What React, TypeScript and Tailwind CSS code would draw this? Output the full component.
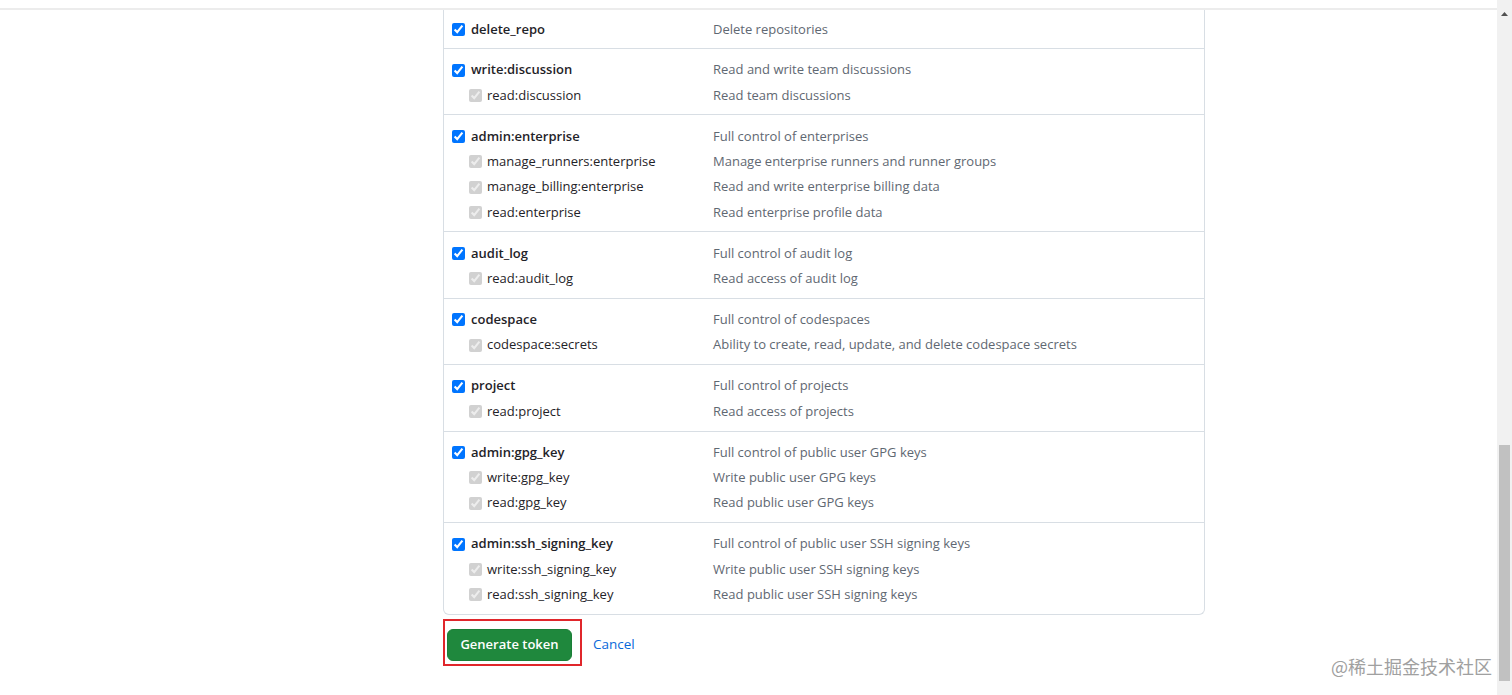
import React from "react";

type Item = { name: string; desc: string };
type Group = { main: Item; subs: Item[] };

const groups: Group[] = [
  { main: { name: "delete_repo", desc: "Delete repositories" }, subs: [] },
  {
    main: { name: "write:discussion", desc: "Read and write team discussions" },
    subs: [{ name: "read:discussion", desc: "Read team discussions" }],
  },
  {
    main: { name: "admin:enterprise", desc: "Full control of enterprises" },
    subs: [
      { name: "manage_runners:enterprise", desc: "Manage enterprise runners and runner groups" },
      { name: "manage_billing:enterprise", desc: "Read and write enterprise billing data" },
      { name: "read:enterprise", desc: "Read enterprise profile data" },
    ],
  },
  {
    main: { name: "audit_log", desc: "Full control of audit log" },
    subs: [{ name: "read:audit_log", desc: "Read access of audit log" }],
  },
  {
    main: { name: "codespace", desc: "Full control of codespaces" },
    subs: [{ name: "codespace:secrets", desc: "Ability to create, read, update, and delete codespace secrets" }],
  },
  {
    main: { name: "project", desc: "Full control of projects" },
    subs: [{ name: "read:project", desc: "Read access of projects" }],
  },
  {
    main: { name: "admin:gpg_key", desc: "Full control of public user GPG keys" },
    subs: [
      { name: "write:gpg_key", desc: "Write public user GPG keys" },
      { name: "read:gpg_key", desc: "Read public user GPG keys" },
    ],
  },
  {
    main: { name: "admin:ssh_signing_key", desc: "Full control of public user SSH signing keys" },
    subs: [
      { name: "write:ssh_signing_key", desc: "Write public user SSH signing keys" },
      { name: "read:ssh_signing_key", desc: "Read public user SSH signing keys" },
    ],
  },
];

function Row({ item, sub }: { item: Item; sub?: boolean }) {
  return (
    <div className="flex h-[25.33px] items-center">
      <div className={sub ? "flex w-[261px] items-center pl-[17px]" : "flex w-[261px] items-center"}>
        <input
          type="checkbox"
          checked
          readOnly
          disabled={sub}
          className="m-0 h-[13px] w-[13px] shrink-0"
        />
        <span
          className={
            sub
              ? "ml-[5px] text-[13px] text-[#1f2328]"
              : "ml-[6px] text-[13px] font-semibold text-[#1f2328]"
          }
        >
          {item.name}
        </span>
      </div>
      <div className="text-[13px] text-[#5f6872]">{item.desc}</div>
    </div>
  );
}

export default function App() {
  return (
    <div
      className="relative flex h-[695px] w-[1512px] overflow-hidden bg-white"
      style={{ fontFamily: '"Open Sans", "Noto Sans", sans-serif' }}
    >
      <div className="flex flex-1 flex-col">
        <div className="h-[10px] shrink-0 border-b-2 border-[#ececec] bg-white" />
        <div className="ml-[443px] w-[762px] rounded-b-[6px] border-x border-b border-[#d8dee4]">
          {groups.map((g, i) => (
            <div
              key={g.main.name}
              className={
                (i === 0 ? "pt-[7px] pb-[5.67px] pl-[8px] " : "pt-[8.36px] pb-[6.36px] pl-[8px] ") +
                (i < groups.length - 1 ? "border-b border-[#d8dee4]" : "")
              }
            >
              <Row item={g.main} />
              {g.subs.map((s) => (
                <Row key={s.name} item={s} sub />
              ))}
            </div>
          ))}
        </div>
        <div className="ml-[443px] mt-[4px] flex items-center">
          <div className="relative flex h-[47px] w-[139px] items-start pl-[4px] pt-[10px]">
            <div className="pointer-events-none absolute inset-0 border-2 border-[#e0262b]" />
            <button className="flex h-[32px] w-[125px] items-center justify-center rounded-[6px] border border-[#1a7f37] bg-[#1f883d] text-[13px] font-semibold text-white">
              Generate token
            </button>
          </div>
          <a className="ml-[11px] mt-[4px] text-[13.5px] font-medium text-[#0969da]">Cancel</a>
        </div>
      </div>
      <div className="relative flex w-[15px] shrink-0 flex-col bg-[#f1f1f1]">
        <div className="flex h-[17px] items-center justify-center pt-[10px]">
          <svg width="7" height="4" viewBox="0 0 7 4">
            <path d="M0 4 L3.5 0 L7 4 Z" fill="#505050" />
          </svg>
        </div>
        <div className="absolute left-[2px] right-[2px] top-[445px] h-[236px] bg-[#c1c1c1]" />
      </div>
      <div
        className="pointer-events-none absolute left-[1331px] top-[653px] text-[18px] text-[#a0a0a0]"
        style={{ fontFamily: '"Noto Sans CJK SC", sans-serif' }}
      >
        @稀土掘金技术社区
      </div>
    </div>
  );
}
